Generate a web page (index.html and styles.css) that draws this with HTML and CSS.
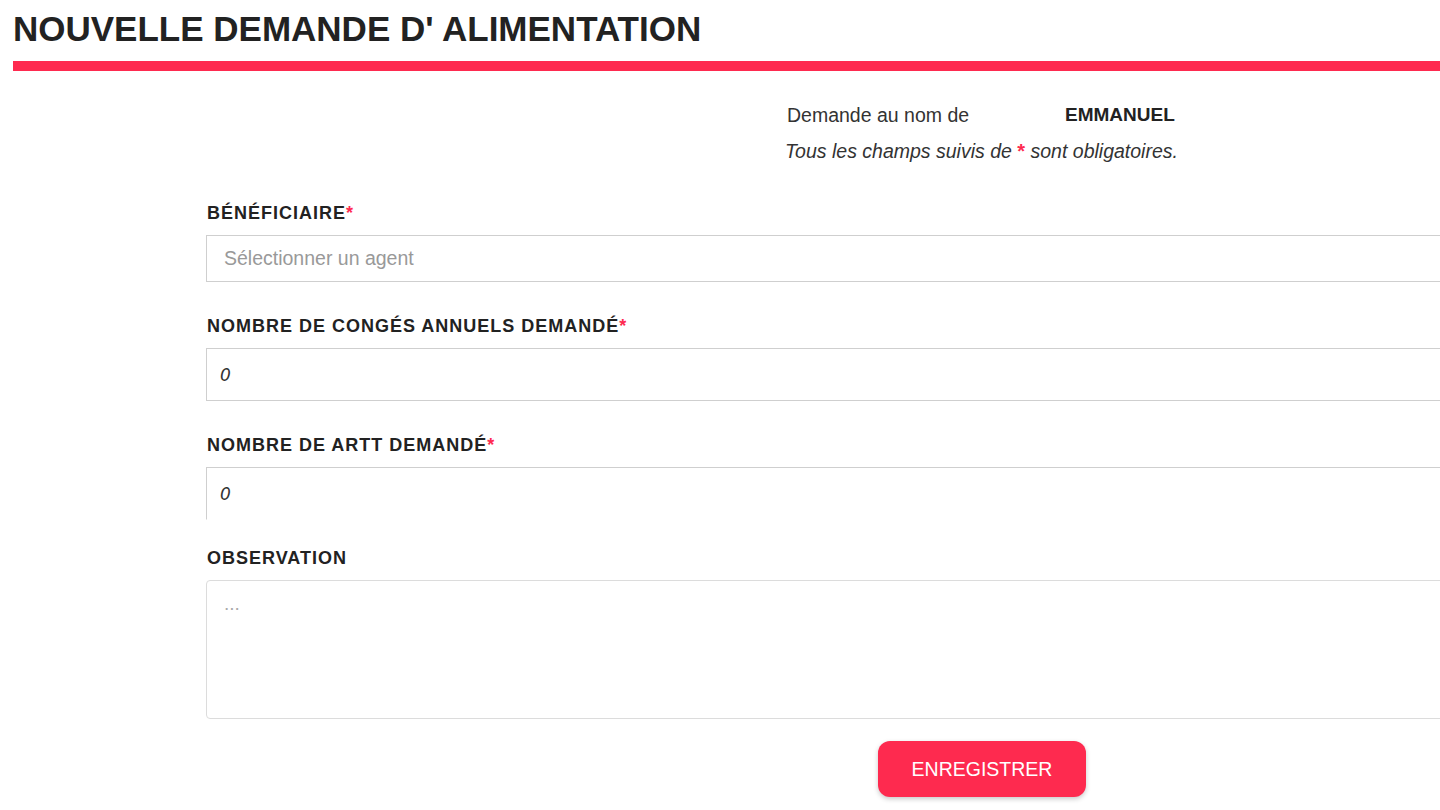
FILE: index.html
```html
<!DOCTYPE html>
<html lang="fr">
<head>
<meta charset="utf-8">
<title>Nouvelle demande d'alimentation</title>
<link rel="stylesheet" href="styles.css">
</head>
<body>
<header class="page-header">
  <h1 class="page-title">NOUVELLE DEMANDE D' ALIMENTATION</h1>
  <div class="title-bar"></div>
</header>

<section class="info">
  <div class="info-row">
    <span class="info-label">Demande au nom de</span>
    <span class="info-name">EMMANUEL</span>
  </div>
  <div class="info-note">Tous les champs suivis de <span class="req-note">*</span> sont obligatoires.</div>
</section>

<form class="form">
  <div class="field">
    <label class="label">BÉNÉFICIAIRE<span class="req">*</span></label>
    <div class="input input-select"><span class="placeholder">Sélectionner un agent</span></div>
  </div>
  <div class="field">
    <label class="label">NOMBRE DE CONGÉS ANNUELS DEMANDÉ<span class="req">*</span></label>
    <div class="input input-num"><span class="value">0</span></div>
  </div>
  <div class="field field-tight">
    <label class="label">NOMBRE DE ARTT DEMANDÉ<span class="req">*</span></label>
    <div class="input input-num input-cut"><span class="value">0</span></div>
  </div>
  <div class="field field-last">
    <label class="label">OBSERVATION</label>
    <div class="textarea"><span class="placeholder-dots">...</span></div>
  </div>
  <div class="actions">
    <button type="button" class="btn">ENREGISTRER</button>
  </div>
</form>
</body>
</html>
```
FILE: styles.css
```css
html, body {
  margin: 0;
  padding: 0;
  background: #ffffff;
}
body {
  font-family: "Liberation Sans", Arial, sans-serif;
  color: #222;
  overflow: hidden;
  width: 1440px;
  height: 810px;
}

.page-header {
  padding-left: 13px;
}
.page-title {
  margin: 0;
  padding-top: 9px;
  font-size: 35px;
  line-height: 40px;
  font-weight: bold;
  color: #222;
}
.title-bar {
  margin-top: 12px;
  height: 10px;
  background: #fe2a4f;
}

.info {
  margin-top: 26px;
  margin-left: 786px;
  font-size: 19.5px;
  line-height: 36px;
  color: #333;
}
.info-row {
  display: flex;
}
.info-label {
  width: 278px;
  padding-left: 1px;
}
.info-name {
  font-weight: bold;
  font-size: 19px;
  color: #222;
}
.info-note {
  font-style: italic;
  margin-left: -1px;
}
.req-note {
  color: #fe2a4f;
  font-weight: bold;
  font-style: normal;
  font-size: 20px;
}

.form {
  margin-top: 34px;
  margin-left: 206px;
  width: 1552px;
  display: flex;
  flex-direction: column;
}
.field {
  display: flex;
  flex-direction: column;
  margin-bottom: 34px;
}
.field-tight {
  margin-bottom: 28px;
}
.field-last {
  margin-bottom: 22px;
}
.label {
  font-size: 18px;
  line-height: 20px;
  font-weight: bold;
  letter-spacing: 1px;
  color: #222;
  margin-bottom: 12px;
  padding-left: 1px;
}
.req {
  color: #fe2a4f;
  letter-spacing: 0;
}

.input {
  box-sizing: border-box;
  border: 1px solid #cfcfcf;
  display: flex;
  align-items: center;
  background: #fff;
}
.input-select {
  height: 47px;
  padding-left: 17px;
}
.input-num {
  height: 53px;
  padding-left: 13px;
}
.input-cut {
  border-bottom-color: transparent;
}
.placeholder {
  font-size: 19.5px;
  color: #999;
}
.value {
  font-family: "DejaVu Sans", Verdana, sans-serif;
  font-style: italic;
  font-size: 17px;
  color: #333;
}

.textarea {
  box-sizing: border-box;
  height: 139px;
  border: 1px solid #dcdcdc;
  border-radius: 4px;
  padding: 12px 0 0 17px;
}
.placeholder-dots {
  font-size: 19px;
  line-height: 22px;
  color: #aaa;
}

.actions {
  display: flex;
  justify-content: center;
}
.btn {
  width: 208px;
  height: 56px;
  border: none;
  border-radius: 12px;
  background: #fe2a4f;
  color: #fff;
  font-family: "Liberation Sans", Arial, sans-serif;
  font-size: 19.5px;
  box-shadow: 0 2px 5px rgba(0, 0, 0, 0.22);
  cursor: pointer;
}
```
